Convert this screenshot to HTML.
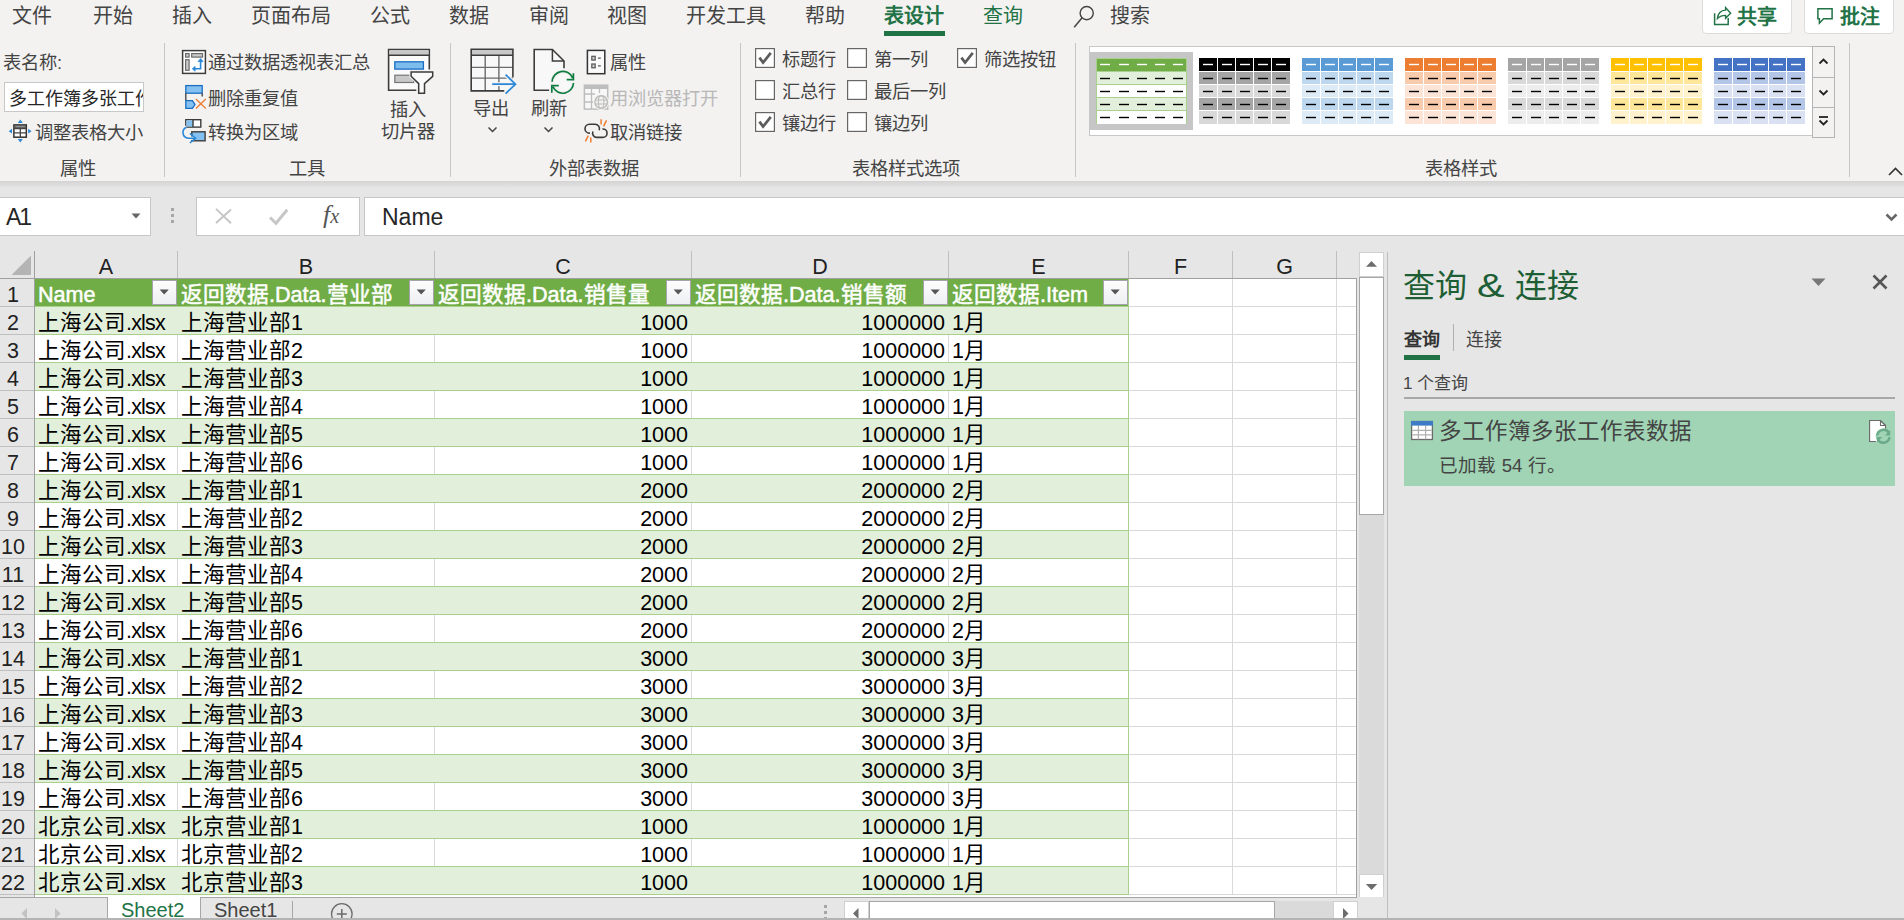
<!DOCTYPE html><html lang="zh-CN"><head><meta charset="utf-8"><style>
html,body{margin:0;padding:0;width:1904px;height:920px;overflow:hidden;background:#e6e6e6;font-family:"Liberation Sans",sans-serif;}
.t{position:absolute;white-space:nowrap;font-family:"Liberation Sans",sans-serif;}
</style></head><body>
<div style="position:absolute;left:0px;top:0px;width:1904px;height:181px;background:#f3f2f1"></div>
<div style="position:absolute;left:0px;top:181px;width:1904px;height:7px;background:linear-gradient(#d3d3d3,#e6e6e6)"></div>
<div class="t" style="left:12px;top:6px;font-size:20px;line-height:20px;color:#444;">文件</div>
<div class="t" style="left:93px;top:6px;font-size:20px;line-height:20px;color:#444;">开始</div>
<div class="t" style="left:172px;top:6px;font-size:20px;line-height:20px;color:#444;">插入</div>
<div class="t" style="left:251px;top:6px;font-size:20px;line-height:20px;color:#444;">页面布局</div>
<div class="t" style="left:370px;top:6px;font-size:20px;line-height:20px;color:#444;">公式</div>
<div class="t" style="left:449px;top:6px;font-size:20px;line-height:20px;color:#444;">数据</div>
<div class="t" style="left:529px;top:6px;font-size:20px;line-height:20px;color:#444;">审阅</div>
<div class="t" style="left:607px;top:6px;font-size:20px;line-height:20px;color:#444;">视图</div>
<div class="t" style="left:686px;top:6px;font-size:20px;line-height:20px;color:#444;">开发工具</div>
<div class="t" style="left:805px;top:6px;font-size:20px;line-height:20px;color:#444;">帮助</div>
<div class="t" style="left:884px;top:6px;font-size:20px;line-height:20px;color:#217346;font-weight:bold">表设计</div>
<div style="position:absolute;left:884px;top:31px;width:61px;height:5px;background:#217346"></div>
<div class="t" style="left:983px;top:6px;font-size:20px;line-height:20px;color:#217346;">查询</div>
<svg style="position:absolute;left:1066px;top:0px;" width="34" height="34" viewBox="0 0 34 34"><circle cx="20.7" cy="13.1" r="6.6" fill="none" stroke="#444" stroke-width="1.4"/><line x1="16.1" y1="17.8" x2="8.2" y2="27.2" stroke="#444" stroke-width="1.5"/></svg>
<div class="t" style="left:1110px;top:6px;font-size:20px;line-height:20px;color:#444;">搜索</div>
<div style="position:absolute;left:1702px;top:-4px;width:90px;height:38px;background:#fff;border:1px solid #dcdcdc;border-radius:4px;box-sizing:border-box"></div>
<svg style="position:absolute;left:1706px;top:2px;" width="34" height="30" viewBox="0 0 34 30"><path d="M8.6 11.2 V22.4 H22.2 V16" fill="none" stroke="#217346" stroke-width="1.5"/><path d="M11.4 16.6 C12 11 15.5 8.3 19.6 8.1 V5.6 L24.6 11.2 L19.6 16.3 V13.4 C16 13.4 13.5 14.5 11.4 16.6 Z" fill="#fff" stroke="#217346" stroke-width="1.4" stroke-linejoin="miter"/></svg>
<div class="t" style="left:1737px;top:7px;font-size:20px;line-height:20px;color:#217346;font-weight:bold">共享</div>
<div style="position:absolute;left:1804px;top:-4px;width:90px;height:38px;background:#fff;border:1px solid #dcdcdc;border-radius:4px;box-sizing:border-box"></div>
<svg style="position:absolute;left:1810px;top:2px;" width="34" height="30" viewBox="0 0 34 30"><path d="M7.9 6.8 H22.1 V16.7 H13.6 L9.4 21.2 V16.7 H7.9 Z" fill="#fff" stroke="#217346" stroke-width="1.5" stroke-linejoin="miter"/></svg>
<div class="t" style="left:1840px;top:7px;font-size:20px;line-height:20px;color:#217346;font-weight:bold">批注</div>
<div style="position:absolute;left:164px;top:43px;width:1px;height:134px;background:#c8c6c4"></div>
<div style="position:absolute;left:450px;top:43px;width:1px;height:134px;background:#c8c6c4"></div>
<div style="position:absolute;left:740px;top:43px;width:1px;height:134px;background:#c8c6c4"></div>
<div style="position:absolute;left:1075px;top:43px;width:1px;height:134px;background:#c8c6c4"></div>
<div style="position:absolute;left:1849px;top:43px;width:1px;height:134px;background:#c8c6c4"></div>
<div class="t" style="left:60px;top:160px;font-size:18.3px;line-height:18.3px;color:#444;">属性</div>
<div class="t" style="left:289px;top:160px;font-size:18.3px;line-height:18.3px;color:#444;">工具</div>
<div class="t" style="left:549px;top:160px;font-size:18.3px;line-height:18.3px;color:#444;">外部表数据</div>
<div class="t" style="left:852px;top:160px;font-size:18.3px;line-height:18.3px;color:#444;">表格样式选项</div>
<div class="t" style="left:1425px;top:160px;font-size:18.3px;line-height:18.3px;color:#444;">表格样式</div>
<div class="t" style="left:3px;top:54px;font-size:18.3px;line-height:18.3px;color:#444;">表名称:</div>
<div style="position:absolute;left:4px;top:82px;width:140px;height:30px;box-sizing:border-box;border:1px solid #c8c8c8;background:#fff;overflow:hidden"><div class="t" style="left:4px;top:7px;font-size:18px;line-height:18px;color:#262626">多工作簿多张工作表数据</div></div>
<svg style="position:absolute;left:4px;top:116px;" width="32" height="32" viewBox="0 0 32 32"><rect x="9.9" y="8.9" width="12.4" height="12.3" fill="#fff" stroke="#333" stroke-width="1.5"/><rect x="10.6" y="9.6" width="11" height="2.6" fill="#333"/><rect x="11.3" y="10.2" width="9.6" height="1.2" fill="#aaa"/><path d="M9.9 12.6 H22.3 M9.9 16.8 H22.3 M16.3 12.6 V21.2" stroke="#444" stroke-width="1.3"/><path d="M16.3 3.6 L18.8 6.9 H13.8 Z M16.3 26.5 L18.8 23.1 H13.8 Z M4.7 15.2 L8 12.8 V17.6 Z M27.6 15.2 L24.2 12.8 V17.6 Z" fill="#2b88d8"/></svg>
<div class="t" style="left:35px;top:124px;font-size:18.3px;line-height:18.3px;color:#444;width:108px;overflow:hidden">调整表格大小</div>
<svg style="position:absolute;left:178px;top:46px;" width="32" height="32" viewBox="0 0 32 32"><rect x="4.6" y="4.6" width="22.8" height="22.8" fill="#fff" stroke="#3c3c3c" stroke-width="1.5"/><rect x="7.6" y="7.6" width="3.5" height="3.5" fill="#ccc" stroke="#6b6b6b" stroke-width="1.2"/><rect x="13.7" y="7.6" width="10.8" height="3.5" fill="#ccc" stroke="#6b6b6b" stroke-width="1.2"/><rect x="7.6" y="13.7" width="3.5" height="10.6" fill="#ccc" stroke="#6b6b6b" stroke-width="1.2"/><path d="M22.6 14.8 V22.8 H16.5" fill="none" stroke="#2b88d8" stroke-width="1.6"/><path d="M22.6 12.6 L20.1 15.6 H25.1 Z M14.3 22.8 L17.1 20.4 V25.2 Z" fill="#2b88d8" stroke="#2b88d8" stroke-width="0.8"/></svg>
<div class="t" style="left:208px;top:54px;font-size:18.3px;line-height:18.3px;color:#444;">通过数据透视表汇总</div>
<svg style="position:absolute;left:178px;top:80px;" width="32" height="32" viewBox="0 0 32 32"><rect x="7.8" y="5.6" width="16.4" height="7.6" fill="#84c1f0" stroke="#1a6ec2" stroke-width="1.3"/><path d="M7.8 13.2 V20.5 M24.2 13.2 V16.6" stroke="#3c3c3c" stroke-width="1.3"/><path d="M7.8 20.6 H14.4 L17 24.5 L14.4 28.3 H7.8 Z" fill="#84c1f0" stroke="#1a6ec2" stroke-width="1.3"/><path d="M17.9 19 L27.8 28.5 M27.8 19 L17.9 28.5" stroke="#ed7d31" stroke-width="1.3"/></svg>
<div class="t" style="left:208px;top:90px;font-size:18.3px;line-height:18.3px;color:#444;">删除重复值</div>
<svg style="position:absolute;left:178px;top:112px;" width="32" height="32" viewBox="0 0 32 32"><rect x="7.8" y="7.7" width="15" height="7.4" fill="#fff" stroke="#3c3c3c" stroke-width="1.4"/><rect x="8.5" y="8.4" width="6.5" height="6" fill="#84c1f0"/><path d="M15 7.7 V15.1" stroke="#3c3c3c" stroke-width="1.4"/><rect x="13.8" y="19.8" width="13.3" height="9" fill="#84c1f0" stroke="#3c3c3c" stroke-width="1.4"/><path d="M8.6 15.2 C3.5 17 3.5 25.5 10.5 26.2 H17" fill="none" stroke="#f3f2f1" stroke-width="3.6"/><path d="M8.6 15.2 C3.5 17 3.5 25.5 10.5 26.2 H17.5" fill="none" stroke="#2b88d8" stroke-width="1.6"/><path d="M11.8 21.5 L17.6 26.2 L11.8 31" fill="none" stroke="#2b88d8" stroke-width="1.6"/></svg>
<div class="t" style="left:208px;top:124px;font-size:18.3px;line-height:18.3px;color:#444;">转换为区域</div>
<svg style="position:absolute;left:384px;top:44px;" width="56" height="56" viewBox="0 0 56 56"><path d="M45.3 25.6 V5.5 H4.6 V46.3 H32.3" fill="#fafafa" stroke="#3c3c3c" stroke-width="1.6"/><rect x="5.4" y="6.3" width="39.1" height="5" fill="#c8c8c8"/><path d="M4.6 11.3 H45.3" stroke="#3c3c3c" stroke-width="1.4"/><rect x="10.8" y="17.8" width="28.6" height="7.3" fill="#7dbdee" stroke="#1a6ec2" stroke-width="1.3"/><rect x="10.8" y="31.2" width="19" height="7.3" fill="#c8c8c8" stroke="#777" stroke-width="1.2"/><path d="M27.1 28 H48.7 V32.3 L40.5 39.6 V49.3 H34.7 V39.6 L27.1 32.3 Z" fill="#fafafa" stroke="#f3f2f1" stroke-width="3.5"/><path d="M27.1 28 H48.7 V32.3 L40.5 39.6 V49.3 H34.7 V39.6 L27.1 32.3 Z" fill="#fafafa" stroke="#3c3c3c" stroke-width="1.5"/></svg>
<div class="t" style="left:390px;top:101px;font-size:18.3px;line-height:18.3px;color:#444;">插入</div>
<div class="t" style="left:381px;top:123px;font-size:18.3px;line-height:18.3px;color:#444;">切片器</div>
<svg style="position:absolute;left:466px;top:44px;" width="56" height="56" viewBox="0 0 56 56"><rect x="5.2" y="5.2" width="41.7" height="41.7" fill="#f8f8f8"/><rect x="5.2" y="5.2" width="41.7" height="6.1" fill="#c8c8c8"/><path d="M5.2 23.4 H46.9 M5.2 34.1 H46.9 M19.2 11.3 V46.9 M32.9 11.3 V46.9" stroke="#6b6b6b" stroke-width="1.4"/><path d="M46.9 33.2 V5.2 H5.2 V46.9 H38.3 M5.2 11.3 H46.9" fill="none" stroke="#3c3c3c" stroke-width="1.6"/><path d="M26.2 40.2 H49 M39.6 30.7 L49.5 40.2 L39.6 49.7" fill="none" stroke="#f3f2f1" stroke-width="4"/><path d="M26.2 40.2 H49 M39.6 30.7 L49.5 40.2 L39.6 49.7" fill="none" stroke="#2b88d8" stroke-width="1.7"/></svg>
<div class="t" style="left:473px;top:100px;font-size:18.3px;line-height:18.3px;color:#444;">导出</div>
<svg style="position:absolute;left:487px;top:126px;" width="12" height="9" viewBox="0 0 12 9"><path d="M1.5 1.5 L5.5 5.5 L9.5 1.5" fill="none" stroke="#444" stroke-width="1.5"/></svg>
<svg style="position:absolute;left:466px;top:44px;" width="114" height="56" viewBox="0 0 114 56"><path d="M83.1 46.3 H68.2 V5.5 H86.4 L98 17 V24.3" fill="#f8f8f8" stroke="#3c3c3c" stroke-width="1.6"/><path d="M86.4 5.5 V17 H98" fill="none" stroke="#3c3c3c" stroke-width="1.5"/><circle cx="96.8" cy="38.3" r="10.7" fill="#f8f8f8" stroke="#f3f2f1" stroke-width="4"/><path d="M86.1 37.7 A10.7 10.7 0 0 1 106.6 33.8 M100.7 35.6 H107.4 V29.2" fill="none" stroke="#107c41" stroke-width="1.7"/><path d="M107.5 39 A10.7 10.7 0 0 1 87 42.8 M92.8 41.7 H85.8 V48.7" fill="none" stroke="#107c41" stroke-width="1.7"/></svg>
<div class="t" style="left:531px;top:100px;font-size:18.3px;line-height:18.3px;color:#444;">刷新</div>
<svg style="position:absolute;left:543px;top:126px;" width="12" height="9" viewBox="0 0 12 9"><path d="M1.5 1.5 L5.5 5.5 L9.5 1.5" fill="none" stroke="#444" stroke-width="1.5"/></svg>
<svg style="position:absolute;left:580px;top:46px;" width="32" height="32" viewBox="0 0 32 32"><rect x="7.4" y="4.4" width="17.4" height="23.3" fill="#fafafa" stroke="#333" stroke-width="1.5"/><rect x="11.8" y="10.3" width="3.4" height="3.8" fill="#ccc" stroke="#555" stroke-width="1.2"/><rect x="11.8" y="18" width="3.4" height="3.8" fill="#ccc" stroke="#555" stroke-width="1.2"/><path d="M18 12.2 H20.8 M18 19.9 H20.8" stroke="#555" stroke-width="1.3"/></svg>
<div class="t" style="left:610px;top:54px;font-size:18.3px;line-height:18.3px;color:#444;">属性</div>
<svg style="position:absolute;left:580px;top:80px;" width="32" height="32" viewBox="0 0 32 32"><rect x="4.4" y="5.2" width="23.3" height="23.9" fill="#f8f8f8" stroke="#bdbdbd" stroke-width="1.5"/><rect x="5" y="5.8" width="22" height="3.2" fill="#bdbdbd"/><path d="M4.4 14 H15 M4.4 22 H13 M11.5 9 V29 M19.5 9 V13" stroke="#bdbdbd" stroke-width="1.3"/><circle cx="21.2" cy="22" r="7" fill="#f3f2f1" stroke="#f3f2f1" stroke-width="2"/><circle cx="21.2" cy="22" r="6.3" fill="none" stroke="#bdbdbd" stroke-width="1.4"/><ellipse cx="21.2" cy="22" rx="2.8" ry="6.3" fill="none" stroke="#bdbdbd" stroke-width="1.1"/><path d="M15 20 H27.4 M15 24 H27.4" stroke="#bdbdbd" stroke-width="1.1"/></svg>
<div class="t" style="left:610px;top:90px;font-size:18.3px;line-height:18.3px;color:#b8b8b8;">用浏览器打开</div>
<svg style="position:absolute;left:578px;top:110px;" width="36" height="38" viewBox="0 0 36 38"><path d="M21.18 20.3 A4.45 4.45 0 0 0 17.05 14.2 H11.45 A4.45 4.45 0 0 0 11.45 23.1 H11.9" fill="none" stroke="#3c3c3c" stroke-width="1.6"/><path d="M14.93 21.5 A4.2 4.2 0 0 0 18.8 27.35 H24.85 A4.2 4.2 0 0 0 24.85 18.95 H24.4" fill="none" stroke="#3c3c3c" stroke-width="1.6"/><path d="M23.1 9.3 V14.5 M28.5 10.3 L25.6 16.3 M10.3 25.6 L7.4 31.4 M12.8 27.5 V32.6" stroke="#ed7d31" stroke-width="1.5"/></svg>
<div class="t" style="left:610px;top:124px;font-size:18.3px;line-height:18.3px;color:#444;">取消链接</div>
<svg style="position:absolute;left:755px;top:48px;" width="20" height="20" viewBox="0 0 20 20"><rect x="0.6" y="0.6" width="18.8" height="18.8" fill="#fff" stroke="#666" stroke-width="1.2"/><path d="M4.4 9.6 L8.1 14.6 L15.8 4.9" fill="none" stroke="#5c5c5c" stroke-width="2.7"/></svg>
<div class="t" style="left:782px;top:51px;font-size:18.3px;line-height:18.3px;color:#444;">标题行</div>
<svg style="position:absolute;left:847px;top:48px;" width="20" height="20" viewBox="0 0 20 20"><rect x="0.6" y="0.6" width="18.8" height="18.8" fill="#fff" stroke="#666" stroke-width="1.2"/></svg>
<div class="t" style="left:874px;top:51px;font-size:18.3px;line-height:18.3px;color:#444;">第一列</div>
<svg style="position:absolute;left:957px;top:48px;" width="20" height="20" viewBox="0 0 20 20"><rect x="0.6" y="0.6" width="18.8" height="18.8" fill="#fff" stroke="#666" stroke-width="1.2"/><path d="M4.4 9.6 L8.1 14.6 L15.8 4.9" fill="none" stroke="#5c5c5c" stroke-width="2.7"/></svg>
<div class="t" style="left:984px;top:51px;font-size:18.3px;line-height:18.3px;color:#444;">筛选按钮</div>
<svg style="position:absolute;left:755px;top:80px;" width="20" height="20" viewBox="0 0 20 20"><rect x="0.6" y="0.6" width="18.8" height="18.8" fill="#fff" stroke="#666" stroke-width="1.2"/></svg>
<div class="t" style="left:782px;top:83px;font-size:18.3px;line-height:18.3px;color:#444;">汇总行</div>
<svg style="position:absolute;left:847px;top:80px;" width="20" height="20" viewBox="0 0 20 20"><rect x="0.6" y="0.6" width="18.8" height="18.8" fill="#fff" stroke="#666" stroke-width="1.2"/></svg>
<div class="t" style="left:874px;top:83px;font-size:18.3px;line-height:18.3px;color:#444;">最后一列</div>
<svg style="position:absolute;left:755px;top:112px;" width="20" height="20" viewBox="0 0 20 20"><rect x="0.6" y="0.6" width="18.8" height="18.8" fill="#fff" stroke="#666" stroke-width="1.2"/><path d="M4.4 9.6 L8.1 14.6 L15.8 4.9" fill="none" stroke="#5c5c5c" stroke-width="2.7"/></svg>
<div class="t" style="left:782px;top:115px;font-size:18.3px;line-height:18.3px;color:#444;">镶边行</div>
<svg style="position:absolute;left:847px;top:112px;" width="20" height="20" viewBox="0 0 20 20"><rect x="0.6" y="0.6" width="18.8" height="18.8" fill="#fff" stroke="#666" stroke-width="1.2"/></svg>
<div class="t" style="left:874px;top:115px;font-size:18.3px;line-height:18.3px;color:#444;">镶边列</div>
<div style="position:absolute;left:1089px;top:46px;width:724px;height:90px;background:#fff;border:1px solid #c8c8c8;box-sizing:border-box"></div>
<div style="position:absolute;left:1090px;top:52px;width:103px;height:78px;background:#c6c6c6"></div>
<svg style="position:absolute;left:1096px;top:58px;" width="91" height="66" viewBox="0 0 91 66"><rect x="0" y="0" width="91" height="66" fill="#a9d08e"/><rect x="1" y="1" width="89" height="12" fill="#70ad47"/><rect x="1" y="14" width="89" height="12" fill="#e2efda"/><rect x="1" y="27" width="89" height="12" fill="#ffffff"/><rect x="1" y="40" width="89" height="12" fill="#e2efda"/><rect x="1" y="53" width="89" height="13" fill="#ffffff"/><rect x="4" y="5.8" width="10" height="1.4" fill="#fff"/><rect x="23" y="5.8" width="10" height="1.4" fill="#fff"/><rect x="41" y="5.8" width="10" height="1.4" fill="#fff"/><rect x="59" y="5.8" width="10" height="1.4" fill="#fff"/><rect x="77" y="5.8" width="10" height="1.4" fill="#fff"/><rect x="4" y="19.8" width="10" height="1.4" fill="#000"/><rect x="23" y="19.8" width="10" height="1.4" fill="#000"/><rect x="41" y="19.8" width="10" height="1.4" fill="#000"/><rect x="59" y="19.8" width="10" height="1.4" fill="#000"/><rect x="77" y="19.8" width="10" height="1.4" fill="#000"/><rect x="4" y="32.8" width="10" height="1.4" fill="#000"/><rect x="23" y="32.8" width="10" height="1.4" fill="#000"/><rect x="41" y="32.8" width="10" height="1.4" fill="#000"/><rect x="59" y="32.8" width="10" height="1.4" fill="#000"/><rect x="77" y="32.8" width="10" height="1.4" fill="#000"/><rect x="4" y="45.8" width="10" height="1.4" fill="#000"/><rect x="23" y="45.8" width="10" height="1.4" fill="#000"/><rect x="41" y="45.8" width="10" height="1.4" fill="#000"/><rect x="59" y="45.8" width="10" height="1.4" fill="#000"/><rect x="77" y="45.8" width="10" height="1.4" fill="#000"/><rect x="4" y="58.8" width="10" height="1.4" fill="#000"/><rect x="23" y="58.8" width="10" height="1.4" fill="#000"/><rect x="41" y="58.8" width="10" height="1.4" fill="#000"/><rect x="59" y="58.8" width="10" height="1.4" fill="#000"/><rect x="77" y="58.8" width="10" height="1.4" fill="#000"/></svg>
<svg style="position:absolute;left:1199px;top:58px;" width="91" height="66" viewBox="0 0 91 66"><rect x="0" y="0" width="18" height="13" fill="#000000"/><rect x="19" y="0" width="17" height="13" fill="#000000"/><rect x="37" y="0" width="17" height="13" fill="#000000"/><rect x="55" y="0" width="17" height="13" fill="#000000"/><rect x="73" y="0" width="18" height="13" fill="#000000"/><rect x="0" y="14" width="18" height="12" fill="#a5a5a5"/><rect x="19" y="14" width="17" height="12" fill="#a5a5a5"/><rect x="37" y="14" width="17" height="12" fill="#a5a5a5"/><rect x="55" y="14" width="17" height="12" fill="#a5a5a5"/><rect x="73" y="14" width="18" height="12" fill="#a5a5a5"/><rect x="0" y="27" width="18" height="12" fill="#d9d9d9"/><rect x="19" y="27" width="17" height="12" fill="#d9d9d9"/><rect x="37" y="27" width="17" height="12" fill="#d9d9d9"/><rect x="55" y="27" width="17" height="12" fill="#d9d9d9"/><rect x="73" y="27" width="18" height="12" fill="#d9d9d9"/><rect x="0" y="40" width="18" height="12" fill="#a5a5a5"/><rect x="19" y="40" width="17" height="12" fill="#a5a5a5"/><rect x="37" y="40" width="17" height="12" fill="#a5a5a5"/><rect x="55" y="40" width="17" height="12" fill="#a5a5a5"/><rect x="73" y="40" width="18" height="12" fill="#a5a5a5"/><rect x="0" y="53" width="18" height="13" fill="#d9d9d9"/><rect x="19" y="53" width="17" height="13" fill="#d9d9d9"/><rect x="37" y="53" width="17" height="13" fill="#d9d9d9"/><rect x="55" y="53" width="17" height="13" fill="#d9d9d9"/><rect x="73" y="53" width="18" height="13" fill="#d9d9d9"/><rect x="4" y="5.8" width="10" height="1.4" fill="#fff"/><rect x="23" y="5.8" width="10" height="1.4" fill="#fff"/><rect x="41" y="5.8" width="10" height="1.4" fill="#fff"/><rect x="59" y="5.8" width="10" height="1.4" fill="#fff"/><rect x="77" y="5.8" width="10" height="1.4" fill="#fff"/><rect x="4" y="19.8" width="10" height="1.4" fill="#000"/><rect x="23" y="19.8" width="10" height="1.4" fill="#000"/><rect x="41" y="19.8" width="10" height="1.4" fill="#000"/><rect x="59" y="19.8" width="10" height="1.4" fill="#000"/><rect x="77" y="19.8" width="10" height="1.4" fill="#000"/><rect x="4" y="32.8" width="10" height="1.4" fill="#000"/><rect x="23" y="32.8" width="10" height="1.4" fill="#000"/><rect x="41" y="32.8" width="10" height="1.4" fill="#000"/><rect x="59" y="32.8" width="10" height="1.4" fill="#000"/><rect x="77" y="32.8" width="10" height="1.4" fill="#000"/><rect x="4" y="45.8" width="10" height="1.4" fill="#000"/><rect x="23" y="45.8" width="10" height="1.4" fill="#000"/><rect x="41" y="45.8" width="10" height="1.4" fill="#000"/><rect x="59" y="45.8" width="10" height="1.4" fill="#000"/><rect x="77" y="45.8" width="10" height="1.4" fill="#000"/><rect x="4" y="58.8" width="10" height="1.4" fill="#000"/><rect x="23" y="58.8" width="10" height="1.4" fill="#000"/><rect x="41" y="58.8" width="10" height="1.4" fill="#000"/><rect x="59" y="58.8" width="10" height="1.4" fill="#000"/><rect x="77" y="58.8" width="10" height="1.4" fill="#000"/></svg>
<svg style="position:absolute;left:1302px;top:58px;" width="91" height="66" viewBox="0 0 91 66"><rect x="0" y="0" width="18" height="13" fill="#5b9bd5"/><rect x="19" y="0" width="17" height="13" fill="#5b9bd5"/><rect x="37" y="0" width="17" height="13" fill="#5b9bd5"/><rect x="55" y="0" width="17" height="13" fill="#5b9bd5"/><rect x="73" y="0" width="18" height="13" fill="#5b9bd5"/><rect x="0" y="14" width="18" height="12" fill="#bdd7ee"/><rect x="19" y="14" width="17" height="12" fill="#bdd7ee"/><rect x="37" y="14" width="17" height="12" fill="#bdd7ee"/><rect x="55" y="14" width="17" height="12" fill="#bdd7ee"/><rect x="73" y="14" width="18" height="12" fill="#bdd7ee"/><rect x="0" y="27" width="18" height="12" fill="#ddebf7"/><rect x="19" y="27" width="17" height="12" fill="#ddebf7"/><rect x="37" y="27" width="17" height="12" fill="#ddebf7"/><rect x="55" y="27" width="17" height="12" fill="#ddebf7"/><rect x="73" y="27" width="18" height="12" fill="#ddebf7"/><rect x="0" y="40" width="18" height="12" fill="#bdd7ee"/><rect x="19" y="40" width="17" height="12" fill="#bdd7ee"/><rect x="37" y="40" width="17" height="12" fill="#bdd7ee"/><rect x="55" y="40" width="17" height="12" fill="#bdd7ee"/><rect x="73" y="40" width="18" height="12" fill="#bdd7ee"/><rect x="0" y="53" width="18" height="13" fill="#ddebf7"/><rect x="19" y="53" width="17" height="13" fill="#ddebf7"/><rect x="37" y="53" width="17" height="13" fill="#ddebf7"/><rect x="55" y="53" width="17" height="13" fill="#ddebf7"/><rect x="73" y="53" width="18" height="13" fill="#ddebf7"/><rect x="4" y="5.8" width="10" height="1.4" fill="#fff"/><rect x="23" y="5.8" width="10" height="1.4" fill="#fff"/><rect x="41" y="5.8" width="10" height="1.4" fill="#fff"/><rect x="59" y="5.8" width="10" height="1.4" fill="#fff"/><rect x="77" y="5.8" width="10" height="1.4" fill="#fff"/><rect x="4" y="19.8" width="10" height="1.4" fill="#000"/><rect x="23" y="19.8" width="10" height="1.4" fill="#000"/><rect x="41" y="19.8" width="10" height="1.4" fill="#000"/><rect x="59" y="19.8" width="10" height="1.4" fill="#000"/><rect x="77" y="19.8" width="10" height="1.4" fill="#000"/><rect x="4" y="32.8" width="10" height="1.4" fill="#000"/><rect x="23" y="32.8" width="10" height="1.4" fill="#000"/><rect x="41" y="32.8" width="10" height="1.4" fill="#000"/><rect x="59" y="32.8" width="10" height="1.4" fill="#000"/><rect x="77" y="32.8" width="10" height="1.4" fill="#000"/><rect x="4" y="45.8" width="10" height="1.4" fill="#000"/><rect x="23" y="45.8" width="10" height="1.4" fill="#000"/><rect x="41" y="45.8" width="10" height="1.4" fill="#000"/><rect x="59" y="45.8" width="10" height="1.4" fill="#000"/><rect x="77" y="45.8" width="10" height="1.4" fill="#000"/><rect x="4" y="58.8" width="10" height="1.4" fill="#000"/><rect x="23" y="58.8" width="10" height="1.4" fill="#000"/><rect x="41" y="58.8" width="10" height="1.4" fill="#000"/><rect x="59" y="58.8" width="10" height="1.4" fill="#000"/><rect x="77" y="58.8" width="10" height="1.4" fill="#000"/></svg>
<svg style="position:absolute;left:1405px;top:58px;" width="91" height="66" viewBox="0 0 91 66"><rect x="0" y="0" width="18" height="13" fill="#ed7d31"/><rect x="19" y="0" width="17" height="13" fill="#ed7d31"/><rect x="37" y="0" width="17" height="13" fill="#ed7d31"/><rect x="55" y="0" width="17" height="13" fill="#ed7d31"/><rect x="73" y="0" width="18" height="13" fill="#ed7d31"/><rect x="0" y="14" width="18" height="12" fill="#f8cbad"/><rect x="19" y="14" width="17" height="12" fill="#f8cbad"/><rect x="37" y="14" width="17" height="12" fill="#f8cbad"/><rect x="55" y="14" width="17" height="12" fill="#f8cbad"/><rect x="73" y="14" width="18" height="12" fill="#f8cbad"/><rect x="0" y="27" width="18" height="12" fill="#fce4d6"/><rect x="19" y="27" width="17" height="12" fill="#fce4d6"/><rect x="37" y="27" width="17" height="12" fill="#fce4d6"/><rect x="55" y="27" width="17" height="12" fill="#fce4d6"/><rect x="73" y="27" width="18" height="12" fill="#fce4d6"/><rect x="0" y="40" width="18" height="12" fill="#f8cbad"/><rect x="19" y="40" width="17" height="12" fill="#f8cbad"/><rect x="37" y="40" width="17" height="12" fill="#f8cbad"/><rect x="55" y="40" width="17" height="12" fill="#f8cbad"/><rect x="73" y="40" width="18" height="12" fill="#f8cbad"/><rect x="0" y="53" width="18" height="13" fill="#fce4d6"/><rect x="19" y="53" width="17" height="13" fill="#fce4d6"/><rect x="37" y="53" width="17" height="13" fill="#fce4d6"/><rect x="55" y="53" width="17" height="13" fill="#fce4d6"/><rect x="73" y="53" width="18" height="13" fill="#fce4d6"/><rect x="4" y="5.8" width="10" height="1.4" fill="#fff"/><rect x="23" y="5.8" width="10" height="1.4" fill="#fff"/><rect x="41" y="5.8" width="10" height="1.4" fill="#fff"/><rect x="59" y="5.8" width="10" height="1.4" fill="#fff"/><rect x="77" y="5.8" width="10" height="1.4" fill="#fff"/><rect x="4" y="19.8" width="10" height="1.4" fill="#000"/><rect x="23" y="19.8" width="10" height="1.4" fill="#000"/><rect x="41" y="19.8" width="10" height="1.4" fill="#000"/><rect x="59" y="19.8" width="10" height="1.4" fill="#000"/><rect x="77" y="19.8" width="10" height="1.4" fill="#000"/><rect x="4" y="32.8" width="10" height="1.4" fill="#000"/><rect x="23" y="32.8" width="10" height="1.4" fill="#000"/><rect x="41" y="32.8" width="10" height="1.4" fill="#000"/><rect x="59" y="32.8" width="10" height="1.4" fill="#000"/><rect x="77" y="32.8" width="10" height="1.4" fill="#000"/><rect x="4" y="45.8" width="10" height="1.4" fill="#000"/><rect x="23" y="45.8" width="10" height="1.4" fill="#000"/><rect x="41" y="45.8" width="10" height="1.4" fill="#000"/><rect x="59" y="45.8" width="10" height="1.4" fill="#000"/><rect x="77" y="45.8" width="10" height="1.4" fill="#000"/><rect x="4" y="58.8" width="10" height="1.4" fill="#000"/><rect x="23" y="58.8" width="10" height="1.4" fill="#000"/><rect x="41" y="58.8" width="10" height="1.4" fill="#000"/><rect x="59" y="58.8" width="10" height="1.4" fill="#000"/><rect x="77" y="58.8" width="10" height="1.4" fill="#000"/></svg>
<svg style="position:absolute;left:1508px;top:58px;" width="91" height="66" viewBox="0 0 91 66"><rect x="0" y="0" width="18" height="13" fill="#a5a5a5"/><rect x="19" y="0" width="17" height="13" fill="#a5a5a5"/><rect x="37" y="0" width="17" height="13" fill="#a5a5a5"/><rect x="55" y="0" width="17" height="13" fill="#a5a5a5"/><rect x="73" y="0" width="18" height="13" fill="#a5a5a5"/><rect x="0" y="14" width="18" height="12" fill="#d9d9d9"/><rect x="19" y="14" width="17" height="12" fill="#d9d9d9"/><rect x="37" y="14" width="17" height="12" fill="#d9d9d9"/><rect x="55" y="14" width="17" height="12" fill="#d9d9d9"/><rect x="73" y="14" width="18" height="12" fill="#d9d9d9"/><rect x="0" y="27" width="18" height="12" fill="#ededed"/><rect x="19" y="27" width="17" height="12" fill="#ededed"/><rect x="37" y="27" width="17" height="12" fill="#ededed"/><rect x="55" y="27" width="17" height="12" fill="#ededed"/><rect x="73" y="27" width="18" height="12" fill="#ededed"/><rect x="0" y="40" width="18" height="12" fill="#d9d9d9"/><rect x="19" y="40" width="17" height="12" fill="#d9d9d9"/><rect x="37" y="40" width="17" height="12" fill="#d9d9d9"/><rect x="55" y="40" width="17" height="12" fill="#d9d9d9"/><rect x="73" y="40" width="18" height="12" fill="#d9d9d9"/><rect x="0" y="53" width="18" height="13" fill="#ededed"/><rect x="19" y="53" width="17" height="13" fill="#ededed"/><rect x="37" y="53" width="17" height="13" fill="#ededed"/><rect x="55" y="53" width="17" height="13" fill="#ededed"/><rect x="73" y="53" width="18" height="13" fill="#ededed"/><rect x="4" y="5.8" width="10" height="1.4" fill="#fff"/><rect x="23" y="5.8" width="10" height="1.4" fill="#fff"/><rect x="41" y="5.8" width="10" height="1.4" fill="#fff"/><rect x="59" y="5.8" width="10" height="1.4" fill="#fff"/><rect x="77" y="5.8" width="10" height="1.4" fill="#fff"/><rect x="4" y="19.8" width="10" height="1.4" fill="#000"/><rect x="23" y="19.8" width="10" height="1.4" fill="#000"/><rect x="41" y="19.8" width="10" height="1.4" fill="#000"/><rect x="59" y="19.8" width="10" height="1.4" fill="#000"/><rect x="77" y="19.8" width="10" height="1.4" fill="#000"/><rect x="4" y="32.8" width="10" height="1.4" fill="#000"/><rect x="23" y="32.8" width="10" height="1.4" fill="#000"/><rect x="41" y="32.8" width="10" height="1.4" fill="#000"/><rect x="59" y="32.8" width="10" height="1.4" fill="#000"/><rect x="77" y="32.8" width="10" height="1.4" fill="#000"/><rect x="4" y="45.8" width="10" height="1.4" fill="#000"/><rect x="23" y="45.8" width="10" height="1.4" fill="#000"/><rect x="41" y="45.8" width="10" height="1.4" fill="#000"/><rect x="59" y="45.8" width="10" height="1.4" fill="#000"/><rect x="77" y="45.8" width="10" height="1.4" fill="#000"/><rect x="4" y="58.8" width="10" height="1.4" fill="#000"/><rect x="23" y="58.8" width="10" height="1.4" fill="#000"/><rect x="41" y="58.8" width="10" height="1.4" fill="#000"/><rect x="59" y="58.8" width="10" height="1.4" fill="#000"/><rect x="77" y="58.8" width="10" height="1.4" fill="#000"/></svg>
<svg style="position:absolute;left:1611px;top:58px;" width="91" height="66" viewBox="0 0 91 66"><rect x="0" y="0" width="18" height="13" fill="#ffc000"/><rect x="19" y="0" width="17" height="13" fill="#ffc000"/><rect x="37" y="0" width="17" height="13" fill="#ffc000"/><rect x="55" y="0" width="17" height="13" fill="#ffc000"/><rect x="73" y="0" width="18" height="13" fill="#ffc000"/><rect x="0" y="14" width="18" height="12" fill="#ffe699"/><rect x="19" y="14" width="17" height="12" fill="#ffe699"/><rect x="37" y="14" width="17" height="12" fill="#ffe699"/><rect x="55" y="14" width="17" height="12" fill="#ffe699"/><rect x="73" y="14" width="18" height="12" fill="#ffe699"/><rect x="0" y="27" width="18" height="12" fill="#fff2cc"/><rect x="19" y="27" width="17" height="12" fill="#fff2cc"/><rect x="37" y="27" width="17" height="12" fill="#fff2cc"/><rect x="55" y="27" width="17" height="12" fill="#fff2cc"/><rect x="73" y="27" width="18" height="12" fill="#fff2cc"/><rect x="0" y="40" width="18" height="12" fill="#ffe699"/><rect x="19" y="40" width="17" height="12" fill="#ffe699"/><rect x="37" y="40" width="17" height="12" fill="#ffe699"/><rect x="55" y="40" width="17" height="12" fill="#ffe699"/><rect x="73" y="40" width="18" height="12" fill="#ffe699"/><rect x="0" y="53" width="18" height="13" fill="#fff2cc"/><rect x="19" y="53" width="17" height="13" fill="#fff2cc"/><rect x="37" y="53" width="17" height="13" fill="#fff2cc"/><rect x="55" y="53" width="17" height="13" fill="#fff2cc"/><rect x="73" y="53" width="18" height="13" fill="#fff2cc"/><rect x="4" y="5.8" width="10" height="1.4" fill="#fff"/><rect x="23" y="5.8" width="10" height="1.4" fill="#fff"/><rect x="41" y="5.8" width="10" height="1.4" fill="#fff"/><rect x="59" y="5.8" width="10" height="1.4" fill="#fff"/><rect x="77" y="5.8" width="10" height="1.4" fill="#fff"/><rect x="4" y="19.8" width="10" height="1.4" fill="#000"/><rect x="23" y="19.8" width="10" height="1.4" fill="#000"/><rect x="41" y="19.8" width="10" height="1.4" fill="#000"/><rect x="59" y="19.8" width="10" height="1.4" fill="#000"/><rect x="77" y="19.8" width="10" height="1.4" fill="#000"/><rect x="4" y="32.8" width="10" height="1.4" fill="#000"/><rect x="23" y="32.8" width="10" height="1.4" fill="#000"/><rect x="41" y="32.8" width="10" height="1.4" fill="#000"/><rect x="59" y="32.8" width="10" height="1.4" fill="#000"/><rect x="77" y="32.8" width="10" height="1.4" fill="#000"/><rect x="4" y="45.8" width="10" height="1.4" fill="#000"/><rect x="23" y="45.8" width="10" height="1.4" fill="#000"/><rect x="41" y="45.8" width="10" height="1.4" fill="#000"/><rect x="59" y="45.8" width="10" height="1.4" fill="#000"/><rect x="77" y="45.8" width="10" height="1.4" fill="#000"/><rect x="4" y="58.8" width="10" height="1.4" fill="#000"/><rect x="23" y="58.8" width="10" height="1.4" fill="#000"/><rect x="41" y="58.8" width="10" height="1.4" fill="#000"/><rect x="59" y="58.8" width="10" height="1.4" fill="#000"/><rect x="77" y="58.8" width="10" height="1.4" fill="#000"/></svg>
<svg style="position:absolute;left:1714px;top:58px;" width="91" height="66" viewBox="0 0 91 66"><rect x="0" y="0" width="18" height="13" fill="#4472c4"/><rect x="19" y="0" width="17" height="13" fill="#4472c4"/><rect x="37" y="0" width="17" height="13" fill="#4472c4"/><rect x="55" y="0" width="17" height="13" fill="#4472c4"/><rect x="73" y="0" width="18" height="13" fill="#4472c4"/><rect x="0" y="14" width="18" height="12" fill="#b4c6e7"/><rect x="19" y="14" width="17" height="12" fill="#b4c6e7"/><rect x="37" y="14" width="17" height="12" fill="#b4c6e7"/><rect x="55" y="14" width="17" height="12" fill="#b4c6e7"/><rect x="73" y="14" width="18" height="12" fill="#b4c6e7"/><rect x="0" y="27" width="18" height="12" fill="#d9e1f2"/><rect x="19" y="27" width="17" height="12" fill="#d9e1f2"/><rect x="37" y="27" width="17" height="12" fill="#d9e1f2"/><rect x="55" y="27" width="17" height="12" fill="#d9e1f2"/><rect x="73" y="27" width="18" height="12" fill="#d9e1f2"/><rect x="0" y="40" width="18" height="12" fill="#b4c6e7"/><rect x="19" y="40" width="17" height="12" fill="#b4c6e7"/><rect x="37" y="40" width="17" height="12" fill="#b4c6e7"/><rect x="55" y="40" width="17" height="12" fill="#b4c6e7"/><rect x="73" y="40" width="18" height="12" fill="#b4c6e7"/><rect x="0" y="53" width="18" height="13" fill="#d9e1f2"/><rect x="19" y="53" width="17" height="13" fill="#d9e1f2"/><rect x="37" y="53" width="17" height="13" fill="#d9e1f2"/><rect x="55" y="53" width="17" height="13" fill="#d9e1f2"/><rect x="73" y="53" width="18" height="13" fill="#d9e1f2"/><rect x="4" y="5.8" width="10" height="1.4" fill="#fff"/><rect x="23" y="5.8" width="10" height="1.4" fill="#fff"/><rect x="41" y="5.8" width="10" height="1.4" fill="#fff"/><rect x="59" y="5.8" width="10" height="1.4" fill="#fff"/><rect x="77" y="5.8" width="10" height="1.4" fill="#fff"/><rect x="4" y="19.8" width="10" height="1.4" fill="#000"/><rect x="23" y="19.8" width="10" height="1.4" fill="#000"/><rect x="41" y="19.8" width="10" height="1.4" fill="#000"/><rect x="59" y="19.8" width="10" height="1.4" fill="#000"/><rect x="77" y="19.8" width="10" height="1.4" fill="#000"/><rect x="4" y="32.8" width="10" height="1.4" fill="#000"/><rect x="23" y="32.8" width="10" height="1.4" fill="#000"/><rect x="41" y="32.8" width="10" height="1.4" fill="#000"/><rect x="59" y="32.8" width="10" height="1.4" fill="#000"/><rect x="77" y="32.8" width="10" height="1.4" fill="#000"/><rect x="4" y="45.8" width="10" height="1.4" fill="#000"/><rect x="23" y="45.8" width="10" height="1.4" fill="#000"/><rect x="41" y="45.8" width="10" height="1.4" fill="#000"/><rect x="59" y="45.8" width="10" height="1.4" fill="#000"/><rect x="77" y="45.8" width="10" height="1.4" fill="#000"/><rect x="4" y="58.8" width="10" height="1.4" fill="#000"/><rect x="23" y="58.8" width="10" height="1.4" fill="#000"/><rect x="41" y="58.8" width="10" height="1.4" fill="#000"/><rect x="59" y="58.8" width="10" height="1.4" fill="#000"/><rect x="77" y="58.8" width="10" height="1.4" fill="#000"/></svg>
<div style="position:absolute;left:1812px;top:46px;width:23px;height:32px;background:#f3f2f1;border:1px solid #b4b4b4;box-sizing:border-box"></div>
<div style="position:absolute;left:1812px;top:77px;width:23px;height:31px;background:#f3f2f1;border:1px solid #b4b4b4;box-sizing:border-box"></div>
<div style="position:absolute;left:1812px;top:107px;width:23px;height:31px;background:#f3f2f1;border:1px solid #b4b4b4;box-sizing:border-box"></div>
<svg style="position:absolute;left:1812px;top:46px;" width="23" height="91" viewBox="0 0 23 91"><path d="M7.5 17.5 L11.5 13.5 L15.5 17.5" fill="none" stroke="#222" stroke-width="1.8"/><path d="M7.5 44.5 L11.5 48.5 L15.5 44.5" fill="none" stroke="#222" stroke-width="1.8"/><path d="M7 71 H16" stroke="#222" stroke-width="1.8"/><path d="M7.5 74.5 L11.5 78.5 L15.5 74.5" fill="none" stroke="#222" stroke-width="1.8"/></svg>
<svg style="position:absolute;left:1887px;top:165px;" width="18" height="12" viewBox="0 0 18 12"><path d="M2 10 L8.5 3.5 L15 10" fill="none" stroke="#333" stroke-width="1.6"/></svg>
<div style="position:absolute;left:-1px;top:197px;width:152px;height:39px;background:#fff;border:1px solid #c6c6c6;box-sizing:border-box"></div>
<div class="t" style="left:6px;top:205px;font-size:23px;line-height:24px;color:#262626;letter-spacing:-2px">A1</div>
<svg style="position:absolute;left:131px;top:213px;" width="12" height="8" viewBox="0 0 12 8"><path d="M0.5 0.5 H9.5 L5 5.5 Z" fill="#666"/></svg>
<div style="position:absolute;left:171px;top:208px;width:3px;height:3px;background:#a6a6a6"></div>
<div style="position:absolute;left:171px;top:214px;width:3px;height:3px;background:#a6a6a6"></div>
<div style="position:absolute;left:171px;top:220px;width:3px;height:3px;background:#a6a6a6"></div>
<div style="position:absolute;left:196px;top:197px;width:164px;height:39px;background:#fff;border:1px solid #c6c6c6;box-sizing:border-box"></div>
<svg style="position:absolute;left:200px;top:195px;" width="40" height="40" viewBox="0 0 40 40"><path d="M16 13.9 L31 28.2 M31 14.5 L16 28" stroke="#c6c6c6" stroke-width="2"/></svg>
<svg style="position:absolute;left:260px;top:195px;" width="40" height="40" viewBox="0 0 40 40"><path d="M10 22.5 L16 28.3 L27.2 14.8" fill="none" stroke="#c6c6c6" stroke-width="3"/></svg>
<div class="t" style="left:323px;top:201px;font-size:26px;line-height:28px;color:#555;font-family:'Liberation Serif',serif"><i>f</i><span style="font-size:20px"><i>x</i></span></div>
<div style="position:absolute;left:364px;top:197px;width:1545px;height:39px;background:#fff;border:1px solid #c6c6c6;box-sizing:border-box"></div>
<div class="t" style="left:382px;top:205px;font-size:23px;line-height:24px;color:#262626;">Name</div>
<svg style="position:absolute;left:1885px;top:213px;" width="14" height="10" viewBox="0 0 14 10"><path d="M1.5 1.5 L6.5 6.5 L11.5 1.5" fill="none" stroke="#666" stroke-width="2.6"/></svg>
<div style="position:absolute;left:0px;top:251px;width:1356px;height:28px;background:#e6e6e6"></div>
<div style="position:absolute;left:0px;top:279px;width:34px;height:618px;background:#e6e6e6"></div>
<div style="position:absolute;left:35px;top:279px;width:1321px;height:618px;background:#fff"></div>
<svg style="position:absolute;left:0px;top:251px;" width="34" height="27" viewBox="0 0 34 27"><path d="M11.5 24 L31 4.5 V24 Z" fill="#b4b4b4"/></svg>
<div style="position:absolute;left:0px;top:278px;width:1357px;height:1px;background:#a0a0a0"></div>
<div style="position:absolute;left:34px;top:251px;width:1px;height:646px;background:#a0a0a0"></div>
<div style="position:absolute;left:177px;top:251px;width:1px;height:27px;background:#bfbfbf"></div>
<div style="position:absolute;left:434px;top:251px;width:1px;height:27px;background:#bfbfbf"></div>
<div style="position:absolute;left:691px;top:251px;width:1px;height:27px;background:#bfbfbf"></div>
<div style="position:absolute;left:948px;top:251px;width:1px;height:27px;background:#bfbfbf"></div>
<div style="position:absolute;left:1128px;top:251px;width:1px;height:27px;background:#bfbfbf"></div>
<div style="position:absolute;left:1232px;top:251px;width:1px;height:27px;background:#bfbfbf"></div>
<div style="position:absolute;left:1336px;top:251px;width:1px;height:27px;background:#bfbfbf"></div>
<div class="t" style="left:35px;top:255px;width:142px;text-align:center;font-size:21.5px;line-height:24px;color:#222">A</div>
<div class="t" style="left:178px;top:255px;width:256px;text-align:center;font-size:21.5px;line-height:24px;color:#222">B</div>
<div class="t" style="left:435px;top:255px;width:256px;text-align:center;font-size:21.5px;line-height:24px;color:#222">C</div>
<div class="t" style="left:692px;top:255px;width:256px;text-align:center;font-size:21.5px;line-height:24px;color:#222">D</div>
<div class="t" style="left:949px;top:255px;width:179px;text-align:center;font-size:21.5px;line-height:24px;color:#222">E</div>
<div class="t" style="left:1129px;top:255px;width:103px;text-align:center;font-size:21.5px;line-height:24px;color:#222">F</div>
<div class="t" style="left:1233px;top:255px;width:103px;text-align:center;font-size:21.5px;line-height:24px;color:#222">G</div>
<div style="position:absolute;left:0px;top:306px;width:34px;height:1px;background:#bfbfbf"></div>
<div class="t" style="left:0px;top:283px;width:26px;text-align:center;font-size:21.5px;line-height:24px;color:#222">1</div>
<div style="position:absolute;left:0px;top:334px;width:34px;height:1px;background:#bfbfbf"></div>
<div class="t" style="left:0px;top:311px;width:26px;text-align:center;font-size:21.5px;line-height:24px;color:#222">2</div>
<div style="position:absolute;left:0px;top:362px;width:34px;height:1px;background:#bfbfbf"></div>
<div class="t" style="left:0px;top:339px;width:26px;text-align:center;font-size:21.5px;line-height:24px;color:#222">3</div>
<div style="position:absolute;left:0px;top:390px;width:34px;height:1px;background:#bfbfbf"></div>
<div class="t" style="left:0px;top:367px;width:26px;text-align:center;font-size:21.5px;line-height:24px;color:#222">4</div>
<div style="position:absolute;left:0px;top:418px;width:34px;height:1px;background:#bfbfbf"></div>
<div class="t" style="left:0px;top:395px;width:26px;text-align:center;font-size:21.5px;line-height:24px;color:#222">5</div>
<div style="position:absolute;left:0px;top:446px;width:34px;height:1px;background:#bfbfbf"></div>
<div class="t" style="left:0px;top:423px;width:26px;text-align:center;font-size:21.5px;line-height:24px;color:#222">6</div>
<div style="position:absolute;left:0px;top:474px;width:34px;height:1px;background:#bfbfbf"></div>
<div class="t" style="left:0px;top:451px;width:26px;text-align:center;font-size:21.5px;line-height:24px;color:#222">7</div>
<div style="position:absolute;left:0px;top:502px;width:34px;height:1px;background:#bfbfbf"></div>
<div class="t" style="left:0px;top:479px;width:26px;text-align:center;font-size:21.5px;line-height:24px;color:#222">8</div>
<div style="position:absolute;left:0px;top:530px;width:34px;height:1px;background:#bfbfbf"></div>
<div class="t" style="left:0px;top:507px;width:26px;text-align:center;font-size:21.5px;line-height:24px;color:#222">9</div>
<div style="position:absolute;left:0px;top:558px;width:34px;height:1px;background:#bfbfbf"></div>
<div class="t" style="left:0px;top:535px;width:26px;text-align:center;font-size:21.5px;line-height:24px;color:#222">10</div>
<div style="position:absolute;left:0px;top:586px;width:34px;height:1px;background:#bfbfbf"></div>
<div class="t" style="left:0px;top:563px;width:26px;text-align:center;font-size:21.5px;line-height:24px;color:#222">11</div>
<div style="position:absolute;left:0px;top:614px;width:34px;height:1px;background:#bfbfbf"></div>
<div class="t" style="left:0px;top:591px;width:26px;text-align:center;font-size:21.5px;line-height:24px;color:#222">12</div>
<div style="position:absolute;left:0px;top:642px;width:34px;height:1px;background:#bfbfbf"></div>
<div class="t" style="left:0px;top:619px;width:26px;text-align:center;font-size:21.5px;line-height:24px;color:#222">13</div>
<div style="position:absolute;left:0px;top:670px;width:34px;height:1px;background:#bfbfbf"></div>
<div class="t" style="left:0px;top:647px;width:26px;text-align:center;font-size:21.5px;line-height:24px;color:#222">14</div>
<div style="position:absolute;left:0px;top:698px;width:34px;height:1px;background:#bfbfbf"></div>
<div class="t" style="left:0px;top:675px;width:26px;text-align:center;font-size:21.5px;line-height:24px;color:#222">15</div>
<div style="position:absolute;left:0px;top:726px;width:34px;height:1px;background:#bfbfbf"></div>
<div class="t" style="left:0px;top:703px;width:26px;text-align:center;font-size:21.5px;line-height:24px;color:#222">16</div>
<div style="position:absolute;left:0px;top:754px;width:34px;height:1px;background:#bfbfbf"></div>
<div class="t" style="left:0px;top:731px;width:26px;text-align:center;font-size:21.5px;line-height:24px;color:#222">17</div>
<div style="position:absolute;left:0px;top:782px;width:34px;height:1px;background:#bfbfbf"></div>
<div class="t" style="left:0px;top:759px;width:26px;text-align:center;font-size:21.5px;line-height:24px;color:#222">18</div>
<div style="position:absolute;left:0px;top:810px;width:34px;height:1px;background:#bfbfbf"></div>
<div class="t" style="left:0px;top:787px;width:26px;text-align:center;font-size:21.5px;line-height:24px;color:#222">19</div>
<div style="position:absolute;left:0px;top:838px;width:34px;height:1px;background:#bfbfbf"></div>
<div class="t" style="left:0px;top:815px;width:26px;text-align:center;font-size:21.5px;line-height:24px;color:#222">20</div>
<div style="position:absolute;left:0px;top:866px;width:34px;height:1px;background:#bfbfbf"></div>
<div class="t" style="left:0px;top:843px;width:26px;text-align:center;font-size:21.5px;line-height:24px;color:#222">21</div>
<div style="position:absolute;left:0px;top:894px;width:34px;height:1px;background:#bfbfbf"></div>
<div class="t" style="left:0px;top:871px;width:26px;text-align:center;font-size:21.5px;line-height:24px;color:#222">22</div>
<div style="position:absolute;left:1129px;top:306px;width:227px;height:1px;background:#d9d9d9"></div>
<div style="position:absolute;left:1129px;top:334px;width:227px;height:1px;background:#d9d9d9"></div>
<div style="position:absolute;left:1129px;top:362px;width:227px;height:1px;background:#d9d9d9"></div>
<div style="position:absolute;left:1129px;top:390px;width:227px;height:1px;background:#d9d9d9"></div>
<div style="position:absolute;left:1129px;top:418px;width:227px;height:1px;background:#d9d9d9"></div>
<div style="position:absolute;left:1129px;top:446px;width:227px;height:1px;background:#d9d9d9"></div>
<div style="position:absolute;left:1129px;top:474px;width:227px;height:1px;background:#d9d9d9"></div>
<div style="position:absolute;left:1129px;top:502px;width:227px;height:1px;background:#d9d9d9"></div>
<div style="position:absolute;left:1129px;top:530px;width:227px;height:1px;background:#d9d9d9"></div>
<div style="position:absolute;left:1129px;top:558px;width:227px;height:1px;background:#d9d9d9"></div>
<div style="position:absolute;left:1129px;top:586px;width:227px;height:1px;background:#d9d9d9"></div>
<div style="position:absolute;left:1129px;top:614px;width:227px;height:1px;background:#d9d9d9"></div>
<div style="position:absolute;left:1129px;top:642px;width:227px;height:1px;background:#d9d9d9"></div>
<div style="position:absolute;left:1129px;top:670px;width:227px;height:1px;background:#d9d9d9"></div>
<div style="position:absolute;left:1129px;top:698px;width:227px;height:1px;background:#d9d9d9"></div>
<div style="position:absolute;left:1129px;top:726px;width:227px;height:1px;background:#d9d9d9"></div>
<div style="position:absolute;left:1129px;top:754px;width:227px;height:1px;background:#d9d9d9"></div>
<div style="position:absolute;left:1129px;top:782px;width:227px;height:1px;background:#d9d9d9"></div>
<div style="position:absolute;left:1129px;top:810px;width:227px;height:1px;background:#d9d9d9"></div>
<div style="position:absolute;left:1129px;top:838px;width:227px;height:1px;background:#d9d9d9"></div>
<div style="position:absolute;left:1129px;top:866px;width:227px;height:1px;background:#d9d9d9"></div>
<div style="position:absolute;left:1129px;top:894px;width:227px;height:1px;background:#d9d9d9"></div>
<div style="position:absolute;left:1232px;top:279px;width:1px;height:618px;background:#d9d9d9"></div>
<div style="position:absolute;left:1336px;top:279px;width:1px;height:618px;background:#d9d9d9"></div>
<div style="position:absolute;left:35px;top:279px;width:1094px;height:27px;background:#70ad47"></div>
<div style="position:absolute;left:35px;top:306px;width:1094px;height:28px;background:#e2efda"></div>
<div style="position:absolute;left:177px;top:334px;width:1px;height:28px;background:#d9d9d9"></div>
<div style="position:absolute;left:434px;top:334px;width:1px;height:28px;background:#d9d9d9"></div>
<div style="position:absolute;left:691px;top:334px;width:1px;height:28px;background:#d9d9d9"></div>
<div style="position:absolute;left:948px;top:334px;width:1px;height:28px;background:#d9d9d9"></div>
<div style="position:absolute;left:35px;top:362px;width:1094px;height:28px;background:#e2efda"></div>
<div style="position:absolute;left:177px;top:390px;width:1px;height:28px;background:#d9d9d9"></div>
<div style="position:absolute;left:434px;top:390px;width:1px;height:28px;background:#d9d9d9"></div>
<div style="position:absolute;left:691px;top:390px;width:1px;height:28px;background:#d9d9d9"></div>
<div style="position:absolute;left:948px;top:390px;width:1px;height:28px;background:#d9d9d9"></div>
<div style="position:absolute;left:35px;top:418px;width:1094px;height:28px;background:#e2efda"></div>
<div style="position:absolute;left:177px;top:446px;width:1px;height:28px;background:#d9d9d9"></div>
<div style="position:absolute;left:434px;top:446px;width:1px;height:28px;background:#d9d9d9"></div>
<div style="position:absolute;left:691px;top:446px;width:1px;height:28px;background:#d9d9d9"></div>
<div style="position:absolute;left:948px;top:446px;width:1px;height:28px;background:#d9d9d9"></div>
<div style="position:absolute;left:35px;top:474px;width:1094px;height:28px;background:#e2efda"></div>
<div style="position:absolute;left:177px;top:502px;width:1px;height:28px;background:#d9d9d9"></div>
<div style="position:absolute;left:434px;top:502px;width:1px;height:28px;background:#d9d9d9"></div>
<div style="position:absolute;left:691px;top:502px;width:1px;height:28px;background:#d9d9d9"></div>
<div style="position:absolute;left:948px;top:502px;width:1px;height:28px;background:#d9d9d9"></div>
<div style="position:absolute;left:35px;top:530px;width:1094px;height:28px;background:#e2efda"></div>
<div style="position:absolute;left:177px;top:558px;width:1px;height:28px;background:#d9d9d9"></div>
<div style="position:absolute;left:434px;top:558px;width:1px;height:28px;background:#d9d9d9"></div>
<div style="position:absolute;left:691px;top:558px;width:1px;height:28px;background:#d9d9d9"></div>
<div style="position:absolute;left:948px;top:558px;width:1px;height:28px;background:#d9d9d9"></div>
<div style="position:absolute;left:35px;top:586px;width:1094px;height:28px;background:#e2efda"></div>
<div style="position:absolute;left:177px;top:614px;width:1px;height:28px;background:#d9d9d9"></div>
<div style="position:absolute;left:434px;top:614px;width:1px;height:28px;background:#d9d9d9"></div>
<div style="position:absolute;left:691px;top:614px;width:1px;height:28px;background:#d9d9d9"></div>
<div style="position:absolute;left:948px;top:614px;width:1px;height:28px;background:#d9d9d9"></div>
<div style="position:absolute;left:35px;top:642px;width:1094px;height:28px;background:#e2efda"></div>
<div style="position:absolute;left:177px;top:670px;width:1px;height:28px;background:#d9d9d9"></div>
<div style="position:absolute;left:434px;top:670px;width:1px;height:28px;background:#d9d9d9"></div>
<div style="position:absolute;left:691px;top:670px;width:1px;height:28px;background:#d9d9d9"></div>
<div style="position:absolute;left:948px;top:670px;width:1px;height:28px;background:#d9d9d9"></div>
<div style="position:absolute;left:35px;top:698px;width:1094px;height:28px;background:#e2efda"></div>
<div style="position:absolute;left:177px;top:726px;width:1px;height:28px;background:#d9d9d9"></div>
<div style="position:absolute;left:434px;top:726px;width:1px;height:28px;background:#d9d9d9"></div>
<div style="position:absolute;left:691px;top:726px;width:1px;height:28px;background:#d9d9d9"></div>
<div style="position:absolute;left:948px;top:726px;width:1px;height:28px;background:#d9d9d9"></div>
<div style="position:absolute;left:35px;top:754px;width:1094px;height:28px;background:#e2efda"></div>
<div style="position:absolute;left:177px;top:782px;width:1px;height:28px;background:#d9d9d9"></div>
<div style="position:absolute;left:434px;top:782px;width:1px;height:28px;background:#d9d9d9"></div>
<div style="position:absolute;left:691px;top:782px;width:1px;height:28px;background:#d9d9d9"></div>
<div style="position:absolute;left:948px;top:782px;width:1px;height:28px;background:#d9d9d9"></div>
<div style="position:absolute;left:35px;top:810px;width:1094px;height:28px;background:#e2efda"></div>
<div style="position:absolute;left:177px;top:838px;width:1px;height:28px;background:#d9d9d9"></div>
<div style="position:absolute;left:434px;top:838px;width:1px;height:28px;background:#d9d9d9"></div>
<div style="position:absolute;left:691px;top:838px;width:1px;height:28px;background:#d9d9d9"></div>
<div style="position:absolute;left:948px;top:838px;width:1px;height:28px;background:#d9d9d9"></div>
<div style="position:absolute;left:35px;top:866px;width:1094px;height:28px;background:#e2efda"></div>
<div style="position:absolute;left:35px;top:306px;width:1094px;height:1px;background:#a9d08e"></div>
<div style="position:absolute;left:35px;top:334px;width:1094px;height:1px;background:#a9d08e"></div>
<div style="position:absolute;left:35px;top:362px;width:1094px;height:1px;background:#a9d08e"></div>
<div style="position:absolute;left:35px;top:390px;width:1094px;height:1px;background:#a9d08e"></div>
<div style="position:absolute;left:35px;top:418px;width:1094px;height:1px;background:#a9d08e"></div>
<div style="position:absolute;left:35px;top:446px;width:1094px;height:1px;background:#a9d08e"></div>
<div style="position:absolute;left:35px;top:474px;width:1094px;height:1px;background:#a9d08e"></div>
<div style="position:absolute;left:35px;top:502px;width:1094px;height:1px;background:#a9d08e"></div>
<div style="position:absolute;left:35px;top:530px;width:1094px;height:1px;background:#a9d08e"></div>
<div style="position:absolute;left:35px;top:558px;width:1094px;height:1px;background:#a9d08e"></div>
<div style="position:absolute;left:35px;top:586px;width:1094px;height:1px;background:#a9d08e"></div>
<div style="position:absolute;left:35px;top:614px;width:1094px;height:1px;background:#a9d08e"></div>
<div style="position:absolute;left:35px;top:642px;width:1094px;height:1px;background:#a9d08e"></div>
<div style="position:absolute;left:35px;top:670px;width:1094px;height:1px;background:#a9d08e"></div>
<div style="position:absolute;left:35px;top:698px;width:1094px;height:1px;background:#a9d08e"></div>
<div style="position:absolute;left:35px;top:726px;width:1094px;height:1px;background:#a9d08e"></div>
<div style="position:absolute;left:35px;top:754px;width:1094px;height:1px;background:#a9d08e"></div>
<div style="position:absolute;left:35px;top:782px;width:1094px;height:1px;background:#a9d08e"></div>
<div style="position:absolute;left:35px;top:810px;width:1094px;height:1px;background:#a9d08e"></div>
<div style="position:absolute;left:35px;top:838px;width:1094px;height:1px;background:#a9d08e"></div>
<div style="position:absolute;left:35px;top:866px;width:1094px;height:1px;background:#a9d08e"></div>
<div style="position:absolute;left:35px;top:894px;width:1094px;height:1px;background:#a9d08e"></div>
<div style="position:absolute;left:1128px;top:279px;width:1px;height:616px;background:#a9d08e"></div>
<div class="t" style="left:38px;top:282px;font-size:21.6px;line-height:26px;color:#fff;font-weight:500;-webkit-text-stroke:0.5px #fff">Name</div>
<div style="position:absolute;left:152px;top:280px;width:25px;height:25px;background:linear-gradient(#fdfdfd,#eeeff2);border:1px solid #a6a3ad;box-sizing:border-box"></div>
<svg style="position:absolute;left:152px;top:280px;" width="25" height="25" viewBox="0 0 25 25"><path d="M7.6 9.6 H16.8 L12.2 14.6 Z" fill="#555"/></svg>
<div class="t" style="left:181px;top:282px;font-size:21.6px;line-height:26px;color:#fff;font-weight:500;-webkit-text-stroke:0.5px #fff">返回数据.Data.营业部</div>
<div style="position:absolute;left:409px;top:280px;width:25px;height:25px;background:linear-gradient(#fdfdfd,#eeeff2);border:1px solid #a6a3ad;box-sizing:border-box"></div>
<svg style="position:absolute;left:409px;top:280px;" width="25" height="25" viewBox="0 0 25 25"><path d="M7.6 9.6 H16.8 L12.2 14.6 Z" fill="#555"/></svg>
<div class="t" style="left:438px;top:282px;font-size:21.6px;line-height:26px;color:#fff;font-weight:500;-webkit-text-stroke:0.5px #fff">返回数据.Data.销售量</div>
<div style="position:absolute;left:666px;top:280px;width:25px;height:25px;background:linear-gradient(#fdfdfd,#eeeff2);border:1px solid #a6a3ad;box-sizing:border-box"></div>
<svg style="position:absolute;left:666px;top:280px;" width="25" height="25" viewBox="0 0 25 25"><path d="M7.6 9.6 H16.8 L12.2 14.6 Z" fill="#555"/></svg>
<div class="t" style="left:695px;top:282px;font-size:21.6px;line-height:26px;color:#fff;font-weight:500;-webkit-text-stroke:0.5px #fff">返回数据.Data.销售额</div>
<div style="position:absolute;left:923px;top:280px;width:25px;height:25px;background:linear-gradient(#fdfdfd,#eeeff2);border:1px solid #a6a3ad;box-sizing:border-box"></div>
<svg style="position:absolute;left:923px;top:280px;" width="25" height="25" viewBox="0 0 25 25"><path d="M7.6 9.6 H16.8 L12.2 14.6 Z" fill="#555"/></svg>
<div class="t" style="left:952px;top:282px;font-size:21.6px;line-height:26px;color:#fff;font-weight:500;-webkit-text-stroke:0.5px #fff">返回数据.Item</div>
<div style="position:absolute;left:1103px;top:280px;width:25px;height:25px;background:linear-gradient(#fdfdfd,#eeeff2);border:1px solid #a6a3ad;box-sizing:border-box"></div>
<svg style="position:absolute;left:1103px;top:280px;" width="25" height="25" viewBox="0 0 25 25"><path d="M7.6 9.6 H16.8 L12.2 14.6 Z" fill="#555"/></svg>
<div class="t" style="left:38px;top:310px;font-size:21.5px;line-height:26px;color:#000;">上海公司<span style="letter-spacing:-0.8px">.xlsx</span></div>
<div class="t" style="left:181px;top:310px;font-size:21.5px;line-height:26px;color:#000;">上海营业部1</div>
<div class="t" style="left:435px;top:310px;width:253px;text-align:right;font-size:21.5px;line-height:26px;color:#000">1000</div>
<div class="t" style="left:692px;top:310px;width:253px;text-align:right;font-size:21.5px;line-height:26px;color:#000">1000000</div>
<div class="t" style="left:952px;top:310px;font-size:21.5px;line-height:26px;color:#000;">1月</div>
<div class="t" style="left:38px;top:338px;font-size:21.5px;line-height:26px;color:#000;">上海公司<span style="letter-spacing:-0.8px">.xlsx</span></div>
<div class="t" style="left:181px;top:338px;font-size:21.5px;line-height:26px;color:#000;">上海营业部2</div>
<div class="t" style="left:435px;top:338px;width:253px;text-align:right;font-size:21.5px;line-height:26px;color:#000">1000</div>
<div class="t" style="left:692px;top:338px;width:253px;text-align:right;font-size:21.5px;line-height:26px;color:#000">1000000</div>
<div class="t" style="left:952px;top:338px;font-size:21.5px;line-height:26px;color:#000;">1月</div>
<div class="t" style="left:38px;top:366px;font-size:21.5px;line-height:26px;color:#000;">上海公司<span style="letter-spacing:-0.8px">.xlsx</span></div>
<div class="t" style="left:181px;top:366px;font-size:21.5px;line-height:26px;color:#000;">上海营业部3</div>
<div class="t" style="left:435px;top:366px;width:253px;text-align:right;font-size:21.5px;line-height:26px;color:#000">1000</div>
<div class="t" style="left:692px;top:366px;width:253px;text-align:right;font-size:21.5px;line-height:26px;color:#000">1000000</div>
<div class="t" style="left:952px;top:366px;font-size:21.5px;line-height:26px;color:#000;">1月</div>
<div class="t" style="left:38px;top:394px;font-size:21.5px;line-height:26px;color:#000;">上海公司<span style="letter-spacing:-0.8px">.xlsx</span></div>
<div class="t" style="left:181px;top:394px;font-size:21.5px;line-height:26px;color:#000;">上海营业部4</div>
<div class="t" style="left:435px;top:394px;width:253px;text-align:right;font-size:21.5px;line-height:26px;color:#000">1000</div>
<div class="t" style="left:692px;top:394px;width:253px;text-align:right;font-size:21.5px;line-height:26px;color:#000">1000000</div>
<div class="t" style="left:952px;top:394px;font-size:21.5px;line-height:26px;color:#000;">1月</div>
<div class="t" style="left:38px;top:422px;font-size:21.5px;line-height:26px;color:#000;">上海公司<span style="letter-spacing:-0.8px">.xlsx</span></div>
<div class="t" style="left:181px;top:422px;font-size:21.5px;line-height:26px;color:#000;">上海营业部5</div>
<div class="t" style="left:435px;top:422px;width:253px;text-align:right;font-size:21.5px;line-height:26px;color:#000">1000</div>
<div class="t" style="left:692px;top:422px;width:253px;text-align:right;font-size:21.5px;line-height:26px;color:#000">1000000</div>
<div class="t" style="left:952px;top:422px;font-size:21.5px;line-height:26px;color:#000;">1月</div>
<div class="t" style="left:38px;top:450px;font-size:21.5px;line-height:26px;color:#000;">上海公司<span style="letter-spacing:-0.8px">.xlsx</span></div>
<div class="t" style="left:181px;top:450px;font-size:21.5px;line-height:26px;color:#000;">上海营业部6</div>
<div class="t" style="left:435px;top:450px;width:253px;text-align:right;font-size:21.5px;line-height:26px;color:#000">1000</div>
<div class="t" style="left:692px;top:450px;width:253px;text-align:right;font-size:21.5px;line-height:26px;color:#000">1000000</div>
<div class="t" style="left:952px;top:450px;font-size:21.5px;line-height:26px;color:#000;">1月</div>
<div class="t" style="left:38px;top:478px;font-size:21.5px;line-height:26px;color:#000;">上海公司<span style="letter-spacing:-0.8px">.xlsx</span></div>
<div class="t" style="left:181px;top:478px;font-size:21.5px;line-height:26px;color:#000;">上海营业部1</div>
<div class="t" style="left:435px;top:478px;width:253px;text-align:right;font-size:21.5px;line-height:26px;color:#000">2000</div>
<div class="t" style="left:692px;top:478px;width:253px;text-align:right;font-size:21.5px;line-height:26px;color:#000">2000000</div>
<div class="t" style="left:952px;top:478px;font-size:21.5px;line-height:26px;color:#000;">2月</div>
<div class="t" style="left:38px;top:506px;font-size:21.5px;line-height:26px;color:#000;">上海公司<span style="letter-spacing:-0.8px">.xlsx</span></div>
<div class="t" style="left:181px;top:506px;font-size:21.5px;line-height:26px;color:#000;">上海营业部2</div>
<div class="t" style="left:435px;top:506px;width:253px;text-align:right;font-size:21.5px;line-height:26px;color:#000">2000</div>
<div class="t" style="left:692px;top:506px;width:253px;text-align:right;font-size:21.5px;line-height:26px;color:#000">2000000</div>
<div class="t" style="left:952px;top:506px;font-size:21.5px;line-height:26px;color:#000;">2月</div>
<div class="t" style="left:38px;top:534px;font-size:21.5px;line-height:26px;color:#000;">上海公司<span style="letter-spacing:-0.8px">.xlsx</span></div>
<div class="t" style="left:181px;top:534px;font-size:21.5px;line-height:26px;color:#000;">上海营业部3</div>
<div class="t" style="left:435px;top:534px;width:253px;text-align:right;font-size:21.5px;line-height:26px;color:#000">2000</div>
<div class="t" style="left:692px;top:534px;width:253px;text-align:right;font-size:21.5px;line-height:26px;color:#000">2000000</div>
<div class="t" style="left:952px;top:534px;font-size:21.5px;line-height:26px;color:#000;">2月</div>
<div class="t" style="left:38px;top:562px;font-size:21.5px;line-height:26px;color:#000;">上海公司<span style="letter-spacing:-0.8px">.xlsx</span></div>
<div class="t" style="left:181px;top:562px;font-size:21.5px;line-height:26px;color:#000;">上海营业部4</div>
<div class="t" style="left:435px;top:562px;width:253px;text-align:right;font-size:21.5px;line-height:26px;color:#000">2000</div>
<div class="t" style="left:692px;top:562px;width:253px;text-align:right;font-size:21.5px;line-height:26px;color:#000">2000000</div>
<div class="t" style="left:952px;top:562px;font-size:21.5px;line-height:26px;color:#000;">2月</div>
<div class="t" style="left:38px;top:590px;font-size:21.5px;line-height:26px;color:#000;">上海公司<span style="letter-spacing:-0.8px">.xlsx</span></div>
<div class="t" style="left:181px;top:590px;font-size:21.5px;line-height:26px;color:#000;">上海营业部5</div>
<div class="t" style="left:435px;top:590px;width:253px;text-align:right;font-size:21.5px;line-height:26px;color:#000">2000</div>
<div class="t" style="left:692px;top:590px;width:253px;text-align:right;font-size:21.5px;line-height:26px;color:#000">2000000</div>
<div class="t" style="left:952px;top:590px;font-size:21.5px;line-height:26px;color:#000;">2月</div>
<div class="t" style="left:38px;top:618px;font-size:21.5px;line-height:26px;color:#000;">上海公司<span style="letter-spacing:-0.8px">.xlsx</span></div>
<div class="t" style="left:181px;top:618px;font-size:21.5px;line-height:26px;color:#000;">上海营业部6</div>
<div class="t" style="left:435px;top:618px;width:253px;text-align:right;font-size:21.5px;line-height:26px;color:#000">2000</div>
<div class="t" style="left:692px;top:618px;width:253px;text-align:right;font-size:21.5px;line-height:26px;color:#000">2000000</div>
<div class="t" style="left:952px;top:618px;font-size:21.5px;line-height:26px;color:#000;">2月</div>
<div class="t" style="left:38px;top:646px;font-size:21.5px;line-height:26px;color:#000;">上海公司<span style="letter-spacing:-0.8px">.xlsx</span></div>
<div class="t" style="left:181px;top:646px;font-size:21.5px;line-height:26px;color:#000;">上海营业部1</div>
<div class="t" style="left:435px;top:646px;width:253px;text-align:right;font-size:21.5px;line-height:26px;color:#000">3000</div>
<div class="t" style="left:692px;top:646px;width:253px;text-align:right;font-size:21.5px;line-height:26px;color:#000">3000000</div>
<div class="t" style="left:952px;top:646px;font-size:21.5px;line-height:26px;color:#000;">3月</div>
<div class="t" style="left:38px;top:674px;font-size:21.5px;line-height:26px;color:#000;">上海公司<span style="letter-spacing:-0.8px">.xlsx</span></div>
<div class="t" style="left:181px;top:674px;font-size:21.5px;line-height:26px;color:#000;">上海营业部2</div>
<div class="t" style="left:435px;top:674px;width:253px;text-align:right;font-size:21.5px;line-height:26px;color:#000">3000</div>
<div class="t" style="left:692px;top:674px;width:253px;text-align:right;font-size:21.5px;line-height:26px;color:#000">3000000</div>
<div class="t" style="left:952px;top:674px;font-size:21.5px;line-height:26px;color:#000;">3月</div>
<div class="t" style="left:38px;top:702px;font-size:21.5px;line-height:26px;color:#000;">上海公司<span style="letter-spacing:-0.8px">.xlsx</span></div>
<div class="t" style="left:181px;top:702px;font-size:21.5px;line-height:26px;color:#000;">上海营业部3</div>
<div class="t" style="left:435px;top:702px;width:253px;text-align:right;font-size:21.5px;line-height:26px;color:#000">3000</div>
<div class="t" style="left:692px;top:702px;width:253px;text-align:right;font-size:21.5px;line-height:26px;color:#000">3000000</div>
<div class="t" style="left:952px;top:702px;font-size:21.5px;line-height:26px;color:#000;">3月</div>
<div class="t" style="left:38px;top:730px;font-size:21.5px;line-height:26px;color:#000;">上海公司<span style="letter-spacing:-0.8px">.xlsx</span></div>
<div class="t" style="left:181px;top:730px;font-size:21.5px;line-height:26px;color:#000;">上海营业部4</div>
<div class="t" style="left:435px;top:730px;width:253px;text-align:right;font-size:21.5px;line-height:26px;color:#000">3000</div>
<div class="t" style="left:692px;top:730px;width:253px;text-align:right;font-size:21.5px;line-height:26px;color:#000">3000000</div>
<div class="t" style="left:952px;top:730px;font-size:21.5px;line-height:26px;color:#000;">3月</div>
<div class="t" style="left:38px;top:758px;font-size:21.5px;line-height:26px;color:#000;">上海公司<span style="letter-spacing:-0.8px">.xlsx</span></div>
<div class="t" style="left:181px;top:758px;font-size:21.5px;line-height:26px;color:#000;">上海营业部5</div>
<div class="t" style="left:435px;top:758px;width:253px;text-align:right;font-size:21.5px;line-height:26px;color:#000">3000</div>
<div class="t" style="left:692px;top:758px;width:253px;text-align:right;font-size:21.5px;line-height:26px;color:#000">3000000</div>
<div class="t" style="left:952px;top:758px;font-size:21.5px;line-height:26px;color:#000;">3月</div>
<div class="t" style="left:38px;top:786px;font-size:21.5px;line-height:26px;color:#000;">上海公司<span style="letter-spacing:-0.8px">.xlsx</span></div>
<div class="t" style="left:181px;top:786px;font-size:21.5px;line-height:26px;color:#000;">上海营业部6</div>
<div class="t" style="left:435px;top:786px;width:253px;text-align:right;font-size:21.5px;line-height:26px;color:#000">3000</div>
<div class="t" style="left:692px;top:786px;width:253px;text-align:right;font-size:21.5px;line-height:26px;color:#000">3000000</div>
<div class="t" style="left:952px;top:786px;font-size:21.5px;line-height:26px;color:#000;">3月</div>
<div class="t" style="left:38px;top:814px;font-size:21.5px;line-height:26px;color:#000;">北京公司<span style="letter-spacing:-0.8px">.xlsx</span></div>
<div class="t" style="left:181px;top:814px;font-size:21.5px;line-height:26px;color:#000;">北京营业部1</div>
<div class="t" style="left:435px;top:814px;width:253px;text-align:right;font-size:21.5px;line-height:26px;color:#000">1000</div>
<div class="t" style="left:692px;top:814px;width:253px;text-align:right;font-size:21.5px;line-height:26px;color:#000">1000000</div>
<div class="t" style="left:952px;top:814px;font-size:21.5px;line-height:26px;color:#000;">1月</div>
<div class="t" style="left:38px;top:842px;font-size:21.5px;line-height:26px;color:#000;">北京公司<span style="letter-spacing:-0.8px">.xlsx</span></div>
<div class="t" style="left:181px;top:842px;font-size:21.5px;line-height:26px;color:#000;">北京营业部2</div>
<div class="t" style="left:435px;top:842px;width:253px;text-align:right;font-size:21.5px;line-height:26px;color:#000">1000</div>
<div class="t" style="left:692px;top:842px;width:253px;text-align:right;font-size:21.5px;line-height:26px;color:#000">1000000</div>
<div class="t" style="left:952px;top:842px;font-size:21.5px;line-height:26px;color:#000;">1月</div>
<div class="t" style="left:38px;top:870px;font-size:21.5px;line-height:26px;color:#000;">北京公司<span style="letter-spacing:-0.8px">.xlsx</span></div>
<div class="t" style="left:181px;top:870px;font-size:21.5px;line-height:26px;color:#000;">北京营业部3</div>
<div class="t" style="left:435px;top:870px;width:253px;text-align:right;font-size:21.5px;line-height:26px;color:#000">1000</div>
<div class="t" style="left:692px;top:870px;width:253px;text-align:right;font-size:21.5px;line-height:26px;color:#000">1000000</div>
<div class="t" style="left:952px;top:870px;font-size:21.5px;line-height:26px;color:#000;">1月</div>
<div style="position:absolute;left:35px;top:895px;width:1322px;height:2px;background:#fff"></div>
<div style="position:absolute;left:1356px;top:279px;width:1px;height:618px;background:#a0a0a0"></div>
<div style="position:absolute;left:1359px;top:252px;width:25px;height:646px;background:#dadada"></div>
<div style="position:absolute;left:1359px;top:252px;width:25px;height:25px;background:#fff;border:1px solid #d0d0d0;box-sizing:border-box"></div>
<svg style="position:absolute;left:1359px;top:252px;" width="25" height="25" viewBox="0 0 25 25"><path d="M7 14.8 L12.5 9 L18 14.8 Z" fill="#6d6d6d"/></svg>
<div style="position:absolute;left:1359px;top:277px;width:25px;height:238px;background:#fff;border:1px solid #a6a6a6;box-sizing:border-box"></div>
<div style="position:absolute;left:1359px;top:874px;width:25px;height:25px;background:#fff;border:1px solid #d0d0d0;box-sizing:border-box"></div>
<svg style="position:absolute;left:1359px;top:874px;" width="25" height="25" viewBox="0 0 25 25"><path d="M6.9 9.9 H18.2 L12.55 16 Z" fill="#6d6d6d"/></svg>
<div style="position:absolute;left:0px;top:897px;width:1387px;height:23px;background:#e6e6e6"></div>
<div style="position:absolute;left:0px;top:897px;width:1357px;height:1px;background:#a6a6a6"></div>
<div style="position:absolute;left:107px;top:897px;width:1px;height:23px;background:#a6a6a6"></div>
<svg style="position:absolute;left:18px;top:905px;" width="48" height="15" viewBox="0 0 48 15"><path d="M9 3 L3.5 8.5 L9 14 Z M37 3 L42.5 8.5 L37 14 Z" fill="#c2c2c2"/></svg>
<div style="position:absolute;left:108px;top:895px;width:92px;height:25px;background:#fff"></div>
<div class="t" style="left:121px;top:900px;font-size:20px;line-height:20px;color:#217346;">Sheet2</div>
<div style="position:absolute;left:200px;top:897px;width:1px;height:23px;background:#a6a6a6"></div>
<div class="t" style="left:214px;top:900px;font-size:20px;line-height:20px;color:#444;">Sheet1</div>
<div style="position:absolute;left:292px;top:901px;width:1px;height:19px;background:#a6a6a6"></div>
<svg style="position:absolute;left:328px;top:900px;" width="28" height="20" viewBox="0 0 28 20"><circle cx="13.8" cy="14" r="10.3" fill="none" stroke="#6b6b6b" stroke-width="1.3"/><path d="M13.8 9 V19 M8.8 14 H18.8" stroke="#6b6b6b" stroke-width="1.5"/></svg>
<div style="position:absolute;left:824px;top:905px;width:3px;height:3px;background:#a6a6a6"></div>
<div style="position:absolute;left:824px;top:911px;width:3px;height:3px;background:#a6a6a6"></div>
<div style="position:absolute;left:824px;top:917px;width:3px;height:3px;background:#a6a6a6"></div>
<div style="position:absolute;left:844px;top:901px;width:513px;height:19px;background:#dadada"></div>
<div style="position:absolute;left:844px;top:901px;width:25px;height:19px;background:#fff;border:1px solid #d0d0d0;border-bottom:none;box-sizing:border-box"></div>
<svg style="position:absolute;left:844px;top:901px;" width="25" height="19" viewBox="0 0 25 19"><path d="M14.5 7 L9 12.5 L14.5 18 Z" fill="#6d6d6d"/></svg>
<div style="position:absolute;left:869px;top:901px;width:406px;height:19px;background:#fff;border:1px solid #a6a6a6;border-bottom:none;box-sizing:border-box"></div>
<div style="position:absolute;left:1333px;top:901px;width:25px;height:19px;background:#fff;border:1px solid #d0d0d0;border-bottom:none;box-sizing:border-box"></div>
<svg style="position:absolute;left:1333px;top:901px;" width="25" height="19" viewBox="0 0 25 19"><path d="M10 7 L15.5 12.5 L10 18 Z" fill="#6d6d6d"/></svg>
<div style="position:absolute;left:1387px;top:252px;width:1px;height:668px;background:#bdbdbd"></div>
<div style="position:absolute;left:1388px;top:237px;width:516px;height:683px;background:#e6e6e6"></div>
<div class="t" style="left:1403px;top:268px;font-size:32px;line-height:36px;color:#1e5e35;">查询</div>
<div class="t" style="left:1477px;top:268px;font-size:33px;line-height:36px;color:#1e5e35;transform:scaleX(1.25);transform-origin:0 0">&amp;</div>
<div class="t" style="left:1515px;top:268px;font-size:32px;line-height:36px;color:#1e5e35;">连接</div>
<svg style="position:absolute;left:1810px;top:276px;" width="18" height="12" viewBox="0 0 18 12"><path d="M1.5 2.5 H15.5 L8.5 10 Z" fill="#777"/></svg>
<svg style="position:absolute;left:1871px;top:273px;" width="18" height="18" viewBox="0 0 18 18"><path d="M2.5 2.5 L15.5 15.5 M15.5 2.5 L2.5 15.5" stroke="#555" stroke-width="2.6"/></svg>
<div class="t" style="left:1404px;top:329px;font-size:18px;line-height:22px;color:#333;font-weight:bold">查询</div>
<div style="position:absolute;left:1404px;top:355px;width:36px;height:5px;background:#217346"></div>
<div style="position:absolute;left:1453px;top:324px;width:1px;height:27px;background:#b0b0b0"></div>
<div class="t" style="left:1466px;top:329px;font-size:18px;line-height:22px;color:#444;">连接</div>
<div class="t" style="left:1403px;top:374px;font-size:17px;line-height:20px;color:#444;">1 个查询</div>
<div style="position:absolute;left:1404px;top:397px;width:491px;height:2px;background:#a8a8a8"></div>
<div style="position:absolute;left:1404px;top:411px;width:491px;height:75px;background:#a0d4b4"></div>
<svg style="position:absolute;left:1404px;top:414px;" width="36" height="32" viewBox="0 0 36 32"><rect x="7.6" y="7.5" width="20.8" height="18" fill="#fff" stroke="#6b6b6b" stroke-width="1.3"/><path d="M8.3 16.3 H27.7 M8.3 20.8 H27.7 M14.4 11.5 V25.2 M21.6 11.5 V25.2" stroke="#b0b0b0" stroke-width="1.2"/><rect x="7" y="7" width="22" height="4.6" fill="#3d7bc4"/></svg>
<div class="t" style="left:1439px;top:419px;font-size:22.5px;line-height:26px;color:#444;">多工作簿多张工作表数据</div>
<div class="t" style="left:1439px;top:455px;font-size:18.6px;line-height:22px;color:#444;word-spacing:0.5px">已加载 54 行。</div>
<svg style="position:absolute;left:1862px;top:414px;" width="34" height="34" viewBox="0 0 34 34"><path d="M13.9 27.5 H7.6 V6.5 H18.5 L23.5 11.5 V14.8" fill="#fff" stroke="#6b6b6b" stroke-width="1.1"/><path d="M7.6 6.5 H18.5 V11.5 H23.5 V27.5 H7.6 Z" fill="#fff"/><path d="M13.9 27.5 H7.6 V6.5 H18.5 L23.5 11.5 V14.8 M18.5 6.5 V11.5 H23.5" fill="none" stroke="#6b6b6b" stroke-width="1.1"/><circle cx="21.4" cy="22.3" r="7.8" fill="#a0d4b4"/><path d="M15.3 21.5 A6.2 6.2 0 0 1 26.6 18.6 M27.5 23.2 A6.2 6.2 0 0 1 16.2 26" fill="none" stroke="#6aa98a" stroke-width="2.4"/><path d="M23 21.6 H28.2 V16 Z M20.2 22.9 H14.9 V28.6 Z" fill="#6aa98a"/></svg>
<div style="position:absolute;left:0px;top:918px;width:1904px;height:2px;background:#b4b4b4"></div>
</body></html>
